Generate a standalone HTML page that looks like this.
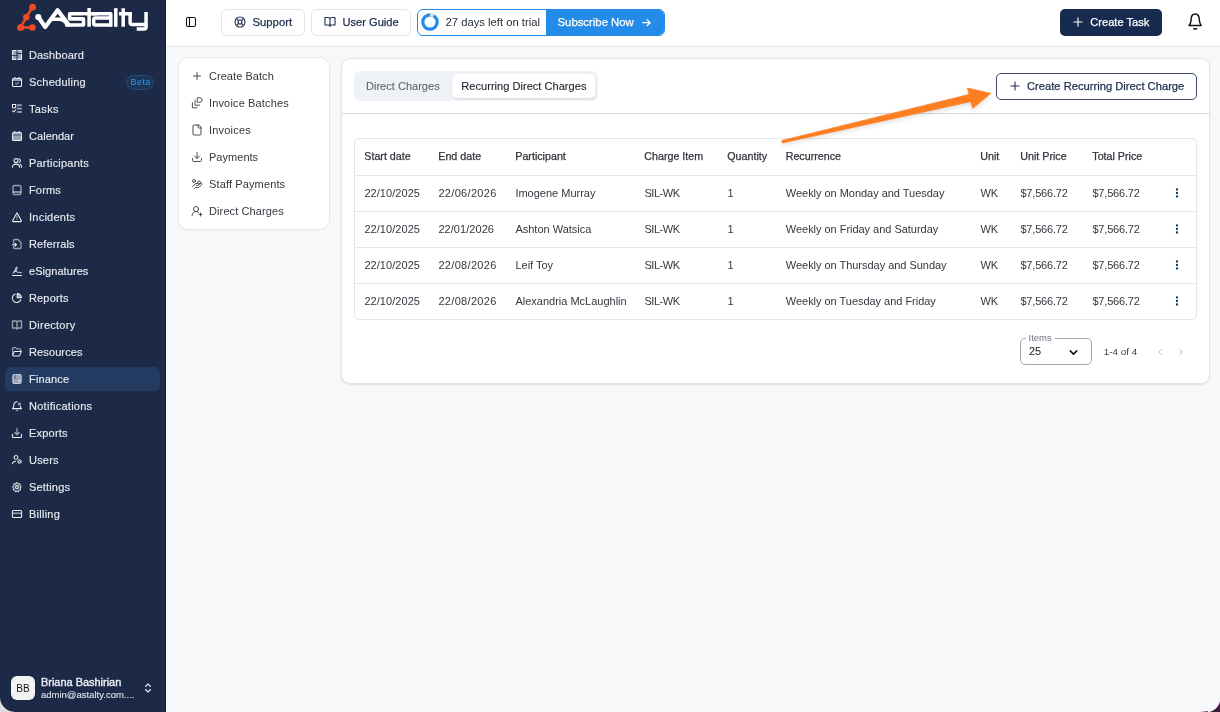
<!DOCTYPE html><html><head><meta charset="utf-8"><style>
*{box-sizing:border-box;margin:0;padding:0}
html,body{width:1220px;height:712px;overflow:hidden;background:#f7f8fa;font-family:"Liberation Sans",sans-serif;font-size:11px;color:#1f2937}
.a{position:absolute}
.t{position:absolute;white-space:nowrap;line-height:14px}
.i{position:absolute;display:block}
.m{-webkit-text-stroke-width:.25px}
</style></head><body><div id="root" style="position:absolute;left:0;top:0;width:1220px;height:712px;will-change:transform">
<div class="a" style="left:0;top:0;width:166px;height:712px;background:#1c2a47;border-right:1px solid #13203c"></div>
<svg class="i" style="left:0;top:0" width="160" height="36" viewBox="0 0 160 36">
<path d="M32.6 7.2 L26.3 17.2 L20.6 27.5 L32.4 27.5" stroke="#f04a23" stroke-width="2.5" fill="none" stroke-linejoin="round"/>
<g fill="#f04a23"><circle cx="32.6" cy="7.2" r="3.4"/><circle cx="26.3" cy="17.2" r="3.2"/><circle cx="20.6" cy="27.5" r="3.5"/><circle cx="32.4" cy="27.5" r="3.3"/></g>
<circle cx="38.3" cy="17" r="3.1" fill="#fff"/>
<g stroke="#fff" fill="none" stroke-width="3.6" stroke-linejoin="round" stroke-linecap="round">
<path d="M38.3 17 L45.2 27 L57.6 10.2 L68.5 24.6" stroke-width="4.1"/>
<path d="M52 19.2 L60 19.2 Q64 19.8 68 24.8"/>
<path d="M66.5 25 H83.5 V19.2 Q83.5 18.85 83 18.85 H70 Q69.6 18.85 69.6 18.4 V14.2 Q69.6 13.75 70 13.75 H84"/>
</g>
<g stroke="#fff" fill="none" stroke-width="3.5" stroke-linejoin="round">
<path d="M85 13.85 H97 M89.1 7.9 V26.8"/>
<path d="M92 13.85 H110.8 V26.8"/>
<path d="M110.8 25.1 H95.5 Q93.7 25.1 93.7 23.3 V19.8 Q93.7 18.1 95.5 18.1 H110.8"/>
<path d="M115.8 8.2 V26.8"/>
<path d="M119 13.85 H131.8 M123.2 8.2 V26.8"/>
<path d="M130.1 12.1 V22.6 Q130.1 24.6 132.1 24.6 H146"/>
<path d="M146.05 12.1 V27 Q146.05 29 144 29 H136.7"/>
</g>
</svg>
<div class="i" style="left:11px;top:49px"><svg width="12" height="12" viewBox="-1 -1 12 12" fill="none" stroke="#eef0f4" stroke-width="1.05" stroke-linecap="round" stroke-linejoin="round"><rect x="0.5" y="0.5" width="9" height="9" rx=".6" fill="rgba(212,218,228,.68)"/><path d="M5 0v10M0 5.6h5M5 3.6h5" stroke="#1c2a47" stroke-width=".9"/></svg></div>
<div class="t m" style="left:29px;top:48px;color:#e8ebf0;-webkit-text-stroke-width:.15px;letter-spacing:0.125px">Dashboard</div>
<div class="i" style="left:11px;top:76px"><svg width="12" height="12" viewBox="-1 -1 12 12" fill="none" stroke="#eef0f4" stroke-width="1.05" stroke-linecap="round" stroke-linejoin="round"><rect x="0.5" y="1.5" width="9" height="8" rx="1"/><rect x="1" y="2" width="8" height="2" fill="rgba(212,218,228,.68)" stroke="none"/><circle cx="2.8" cy="1.2" r="1.1" fill="#c8ced8" stroke="none"/><circle cx="7.2" cy="1.2" r="1.1" fill="#c8ced8" stroke="none"/><path d="M3.4 6.4l1.1 1 2-2" stroke="rgba(212,218,228,.68)"/></svg></div>
<div class="t m" style="left:29px;top:75px;color:#e8ebf0;-webkit-text-stroke-width:.15px;letter-spacing:0.244px">Scheduling</div>
<div class="i" style="left:11px;top:103px"><svg width="12" height="12" viewBox="-1 -1 12 12" fill="none" stroke="#eef0f4" stroke-width="1.05" stroke-linecap="round" stroke-linejoin="round"><rect x="0.5" y="0.5" width="3.2" height="3.2"/><rect x="1.5" y="1.5" width="1.2" height="1.2" fill="#000" stroke="none"/><path d="M0.6 6.8l1.2 1.1 2-2"/><rect x="5" y="0.3" width="4.8" height="1.8" fill="rgba(212,218,228,.68)" stroke="none"/><rect x="5" y="3.7" width="4.8" height="1.8" fill="rgba(212,218,228,.68)" stroke="none"/><rect x="5" y="7.1" width="4.8" height="1.8" fill="rgba(212,218,228,.68)" stroke="none"/></svg></div>
<div class="t m" style="left:29px;top:102px;color:#e8ebf0;-webkit-text-stroke-width:.15px;letter-spacing:0.35px">Tasks</div>
<div class="i" style="left:11px;top:130px"><svg width="12" height="12" viewBox="-1 -1 12 12" fill="none" stroke="#eef0f4" stroke-width="1.05" stroke-linecap="round" stroke-linejoin="round"><rect x="0.5" y="1.5" width="9" height="8" rx="1"/><rect x="1" y="2" width="8" height="7" fill="rgba(212,218,228,.68)" stroke="none"/><path d="M1 4.1h8" stroke="#1c2a47" stroke-width=".5"/><circle cx="2.8" cy="1.2" r="1.1" fill="#c8ced8" stroke="none"/><circle cx="7.2" cy="1.2" r="1.1" fill="#c8ced8" stroke="none"/></svg></div>
<div class="t m" style="left:29px;top:129px;color:#e8ebf0;-webkit-text-stroke-width:.15px;letter-spacing:0.043px">Calendar</div>
<div class="i" style="left:11px;top:157px"><svg width="12" height="12" viewBox="-1 -1 12 12" fill="none" stroke="#eef0f4" stroke-width="1.05" stroke-linecap="round" stroke-linejoin="round"><circle cx="4" cy="2.6" r="2"/><path d="M0.4 9.3c0-2 1.5-3.2 3.6-3.2s3.6 1.2 3.6 3.2"/><path d="M7 0.8c1 .4 1.4 1.2 1.4 1.9s-.4 1.4-1.4 1.8M8.2 6.3c.9.4 1.4 1.5 1.4 3"/></svg></div>
<div class="t m" style="left:29px;top:156px;color:#e8ebf0;-webkit-text-stroke-width:.15px;letter-spacing:0.209px">Participants</div>
<div class="i" style="left:11px;top:184px"><svg width="12" height="12" viewBox="-1 -1 12 12" fill="none" stroke="#eef0f4" stroke-width="1.05" stroke-linecap="round" stroke-linejoin="round"><rect x="1" y="0.5" width="8" height="9" rx="1.4" stroke="rgba(212,218,228,.68)" stroke-width="1.3"/><path d="M1 7h8" stroke="#eef0f4"/></svg></div>
<div class="t m" style="left:29px;top:183px;color:#e8ebf0;-webkit-text-stroke-width:.15px;letter-spacing:0.15px">Forms</div>
<div class="i" style="left:11px;top:211px"><svg width="12" height="12" viewBox="-1 -1 12 12" fill="none" stroke="#eef0f4" stroke-width="1.05" stroke-linecap="round" stroke-linejoin="round"><path d="M5 0.8L0.6 8.8a.6.6 0 0 0 .5.8h7.8a.6.6 0 0 0 .5-.8z"/><path d="M5 3.8v2.2M5 7.6h.01" stroke="rgba(212,218,228,.68)" stroke-width="1.2"/></svg></div>
<div class="t m" style="left:29px;top:210px;color:#e8ebf0;-webkit-text-stroke-width:.15px;letter-spacing:0.237px">Incidents</div>
<div class="i" style="left:11px;top:238px"><svg width="12" height="12" viewBox="-1 -1 12 12" fill="none" stroke="#eef0f4" stroke-width="1.05" stroke-linecap="round" stroke-linejoin="round"><path d="M1.6 4V1.5a1 1 0 0 1 1-1H6l3 3v5a1 1 0 0 1-1 1H2.6a1 1 0 0 1-1-1V7.5" stroke="rgba(212,218,228,.68)" stroke-width="1.3"/><path d="M0.3 5.7h4.2M3 4.3l1.5 1.4L3 7.1"/></svg></div>
<div class="t m" style="left:29px;top:237px;color:#e8ebf0;-webkit-text-stroke-width:.15px;letter-spacing:0.125px">Referrals</div>
<div class="i" style="left:11px;top:265px"><svg width="12" height="12" viewBox="-1 -1 12 12" fill="none" stroke="#eef0f4" stroke-width="1.05" stroke-linecap="round" stroke-linejoin="round"><path d="M0.5 9.5h9"/><path d="M0.8 7.4C2.2 7 3.2 4 4 1.8 4.6 .3 5.8 1 5 2.6 4.2 4.5 3 6.5 2.4 6.2c-.8-.3.4-1.6 1.2-1.6 1 0 1.4 2.4 2.4 1.8.8-.5 1.3-.2 1.6.2s1 .3 1.8 0" stroke-width=".95"/></svg></div>
<div class="t m" style="left:29px;top:264px;color:#e8ebf0;-webkit-text-stroke-width:.15px;letter-spacing:0.06px">eSignatures</div>
<div class="i" style="left:11px;top:292px"><svg width="12" height="12" viewBox="-1 -1 12 12" fill="none" stroke="#eef0f4" stroke-width="1.05" stroke-linecap="round" stroke-linejoin="round"><path d="M8.8 6.8A4.4 4.4 0 1 1 3.2 1"/><path d="M5.2 0.6v4.2h4.2A4.2 4.2 0 0 0 5.2 .6z" fill="rgba(212,218,228,.68)" stroke="#eef0f4"/></svg></div>
<div class="t m" style="left:29px;top:291px;color:#e8ebf0;-webkit-text-stroke-width:.15px;letter-spacing:0.15px">Reports</div>
<div class="i" style="left:11px;top:319px"><svg width="12" height="12" viewBox="-1 -1 12 12" fill="none" stroke="#eef0f4" stroke-width="1.05" stroke-linecap="round" stroke-linejoin="round"><path d="M0.5 1h3a1.5 1.5 0 0 1 1.5 1.5V9.3A1.3 1.3 0 0 0 3.8 8H.5zM9.5 1h-3A1.5 1.5 0 0 0 5 2.5V9.3A1.3 1.3 0 0 1 6.2 8h3.3z" stroke="rgba(212,218,228,.68)" stroke-width="1.3"/></svg></div>
<div class="t m" style="left:29px;top:318px;color:#e8ebf0;-webkit-text-stroke-width:.15px;letter-spacing:0.275px">Directory</div>
<div class="i" style="left:11px;top:346px"><svg width="12" height="12" viewBox="-1 -1 12 12" fill="none" stroke="#eef0f4" stroke-width="1.05" stroke-linecap="round" stroke-linejoin="round"><path d="M0.6 7.8V1.6a1 1 0 0 1 1-1h2l1.2 1.3h3a1 1 0 0 1 1 1v1" stroke="rgba(212,218,228,.68)" stroke-width="1.2"/><path d="M0.6 8.4l1.8-4h7l-1.6 4a1 1 0 0 1-.9.6H1.5" stroke="#eef0f4"/></svg></div>
<div class="t m" style="left:29px;top:345px;color:#e8ebf0;-webkit-text-stroke-width:.15px;letter-spacing:0.112px">Resources</div>
<div class="a" style="left:5px;top:367px;width:155px;height:24px;border-radius:5.5px;background:#233a61"></div>
<div class="i" style="left:11px;top:373px"><svg width="12" height="12" viewBox="-1 -1 12 12" fill="none" stroke="#eef0f4" stroke-width="1.05" stroke-linecap="round" stroke-linejoin="round"><rect x="0.8" y="0.5" width="8.4" height="9" rx="1.4" fill="rgba(212,218,228,.68)" stroke="rgba(220,225,235,.8)"/><path d="M6.6 6.8h1.2" stroke="#eef0f4"/><path d="M3 1v3.5" stroke="#263c63" stroke-width=".7"/></svg></div>
<div class="t m" style="left:29px;top:372px;color:#e8ebf0;-webkit-text-stroke-width:.15px;letter-spacing:0.167px">Finance</div>
<div class="i" style="left:11px;top:400px"><svg width="12" height="12" viewBox="-1 -1 12 12" fill="none" stroke="#eef0f4" stroke-width="1.05" stroke-linecap="round" stroke-linejoin="round"><path d="M5.2 0.8A3.3 3.3 0 0 0 1.8 4c0 2.5-1.3 3.6-1.3 3.6h9s-.9-.8-1.2-2.3"/><circle cx="7.5" cy="3" r="1.6" fill="rgba(212,218,228,.68)" stroke="none"/><path d="M4.2 9.2l.8.6.8-.6" stroke="rgba(212,218,228,.68)"/></svg></div>
<div class="t m" style="left:29px;top:399px;color:#e8ebf0;-webkit-text-stroke-width:.15px;letter-spacing:0.267px">Notifications</div>
<div class="i" style="left:11px;top:427px"><svg width="12" height="12" viewBox="-1 -1 12 12" fill="none" stroke="#eef0f4" stroke-width="1.05" stroke-linecap="round" stroke-linejoin="round"><path d="M0.5 6.3v2.2a1 1 0 0 0 1 1h7a1 1 0 0 0 1-1V6.3"/><path d="M5 0.5v6M2.8 4.5L5 6.8l2.2-2.3" stroke="rgba(212,218,228,.68)" stroke-width="1.3"/></svg></div>
<div class="t m" style="left:29px;top:426px;color:#e8ebf0;-webkit-text-stroke-width:.15px;letter-spacing:0.217px">Exports</div>
<div class="i" style="left:11px;top:454px"><svg width="12" height="12" viewBox="-1 -1 12 12" fill="none" stroke="#eef0f4" stroke-width="1.05" stroke-linecap="round" stroke-linejoin="round"><circle cx="4" cy="2.4" r="1.9"/><path d="M0.5 8.8c.2-1.6 1.3-2.6 3-2.6"/><circle cx="7.6" cy="6.6" r="1.1" stroke-width="1"/><circle cx="7.6" cy="6.6" r="2.1" stroke="rgba(212,218,228,.68)" stroke-width=".9" stroke-dasharray="1 .6"/></svg></div>
<div class="t m" style="left:29px;top:453px;color:#e8ebf0;-webkit-text-stroke-width:.15px;letter-spacing:0.2px">Users</div>
<div class="i" style="left:11px;top:481px"><svg width="12" height="12" viewBox="-1 -1 12 12" fill="none" stroke="#eef0f4" stroke-width="1.05" stroke-linecap="round" stroke-linejoin="round"><path d="M5 0.4l1.2 1.3 1.8-.1.2 1.8 1.3 1.2-1 1.6.4 1.7-1.7.6-.8 1.6L5 9.4l-1.6.7-.8-1.6-1.7-.6.4-1.7-1-1.6 1.3-1.2.2-1.8 1.8.1z" stroke-width="1" stroke="#eef0f4" fill="rgba(212,218,228,.25)" transform="scale(.95) translate(.25 .25)"/><circle cx="5" cy="5" r="1.4" stroke="#eef0f4" fill="#1c2a47"/></svg></div>
<div class="t m" style="left:29px;top:480px;color:#e8ebf0;-webkit-text-stroke-width:.15px;letter-spacing:0.171px">Settings</div>
<div class="i" style="left:11px;top:508px"><svg width="12" height="12" viewBox="-1 -1 12 12" fill="none" stroke="#eef0f4" stroke-width="1.05" stroke-linecap="round" stroke-linejoin="round"><rect x="0.4" y="1.5" width="9.2" height="7" rx="1"/><rect x="0.9" y="3.5" width="8.2" height="1.6" fill="rgba(212,218,228,.68)" stroke="none"/></svg></div>
<div class="t m" style="left:29px;top:507px;color:#e8ebf0;-webkit-text-stroke-width:.15px;letter-spacing:0.25px">Billing</div>
<div class="a" style="left:126px;top:75px;width:28px;height:15px;border-radius:8px;background:#1d3557;border:1px solid #24497a"></div>
<div class="t" style="left:130.5px;top:74.8px;color:#2b98f0;font-size:9px;letter-spacing:.45px;line-height:15px">Beta</div>
<div class="a" style="left:11px;top:676px;width:24px;height:24px;border-radius:6px;background:#f2f2f3"></div>
<div class="t" style="left:11px;top:677px;width:24px;line-height:24px;text-align:center;font-size:10px;color:#111">BB</div>
<div class="t" style="left:41px;top:675px;color:#eef0f4;font-size:10.95px;-webkit-text-stroke-width:.35px">Briana Bashirian</div>
<div class="t" style="left:41px;top:688px;color:#dfe3ea;font-size:9.5px;-webkit-text-stroke-width:.1px">admin@astalty.com....</div>
<div class="i" style="left:142px;top:682px"><svg width="12" height="12" viewBox="0 0 24 24" fill="none" stroke="#e6e9ef" stroke-width="2.2" stroke-linecap="round" stroke-linejoin="round" ><path d="M7 15l5 5 5-5M7 9l5-5 5 5"/></svg></div>
<div class="a" style="left:166px;top:0;width:1054px;height:47px;background:#fff;border-bottom:1px solid #e4e7eb"></div>
<div class="i" style="left:185px;top:16px"><svg width="12" height="12" viewBox="0 0 24 24" fill="none" stroke="#111" stroke-width="2.2" stroke-linecap="round" stroke-linejoin="round" ><rect x="3" y="3" width="18" height="18" rx="3"/><path d="M9 3v18"/></svg></div>
<div class="a" style="left:221px;top:9px;width:84px;height:27px;border:1px solid #dfe5ee;border-radius:6px;background:#fff"></div>
<div class="i" style="left:234px;top:16px"><svg width="12" height="12" viewBox="0 0 24 24" fill="none" stroke="#1e2d4d" stroke-width="2.2" stroke-linecap="round" stroke-linejoin="round" ><circle cx="12" cy="12" r="10"/><circle cx="12" cy="12" r="4"/><path d="M4.9 4.9l4.3 4.3M14.8 9.2l4.3-4.3M14.8 14.8l4.3 4.3M9.2 14.8l-4.3 4.3"/></svg></div>
<div class="t m" style="left:252.5px;top:15px;color:#1e2d4d;font-size:11.3px">Support</div>
<div class="a" style="left:311px;top:9px;width:100px;height:27px;border:1px solid #dfe5ee;border-radius:6px;background:#fff"></div>
<div class="i" style="left:324px;top:16px"><svg width="12" height="12" viewBox="0 0 24 24" fill="none" stroke="#1e2d4d" stroke-width="2.2" stroke-linecap="round" stroke-linejoin="round" ><path d="M2 3h6a4 4 0 0 1 4 4v14a3 3 0 0 0-3-3H2zM22 3h-6a4 4 0 0 0-4 4v14a3 3 0 0 1 3-3h7z"/></svg></div>
<div class="t m" style="left:342.5px;top:15px;color:#1e2d4d;font-size:11.1px">User Guide</div>
<div class="a" style="left:417px;top:9px;width:248px;height:27px;border:1px solid #238ce9;border-radius:6px;background:#fff;overflow:hidden"><div class="a" style="left:128px;top:0;width:120px;height:25px;background:#238ce9"></div></div>
<svg class="i" style="left:420.8px;top:12.8px" width="18" height="18" viewBox="0 0 18 18"><circle cx="9" cy="9" r="7.2" stroke="#238ce9" stroke-width="3.2" fill="none"/><path d="M9 1.8 A7.2 7.2 0 0 1 12.6 2.8" stroke="#d6e2ee" stroke-width="3.2" fill="none"/></svg>
<div class="t" style="left:445.5px;top:15px;color:#1f2937;font-size:11.25px">27 days left on trial</div>
<div class="t m" style="left:557.5px;top:15px;color:#fff;font-size:11.35px">Subscribe Now</div>
<svg class="i" style="left:641.5px;top:18.8px" width="9" height="7.4" viewBox="0 0 9 7.4" fill="none" stroke="#fff" stroke-width="1.2" stroke-linecap="round" stroke-linejoin="round"><path d="M0.7 3.7h7.5M5 0.6l3.2 3.1L5 6.8"/></svg>
<div class="a" style="left:1060px;top:9px;width:102px;height:27px;border-radius:5px;background:#172a4f"></div>
<div class="i" style="left:1071px;top:15.3px"><svg width="14" height="14" viewBox="0 0 24 24" fill="none" stroke="#fff" stroke-width="1.9" stroke-linecap="round" stroke-linejoin="round" ><path d="M5 12h14M12 5v14"/></svg></div>
<div class="t m" style="left:1090.3px;top:15px;color:#fff;font-size:11.1px">Create Task</div>
<svg class="i" style="left:1186px;top:12px" width="18" height="20" viewBox="0 0 18 20" fill="none" stroke="#111" stroke-width="1.5" stroke-linejoin="round" stroke-linecap="round"><path d="M5 8.5 Q5 2 9.2 2 Q13.4 2 13.4 8.5 Q13.6 11.5 15.2 13.6 H3 Q4.8 11.5 5 8.5z"/><path d="M7.8 16.6 Q9.2 17.6 10.6 16.6"/></svg>
<div class="a" style="left:179px;top:58px;width:150px;height:171px;background:#fff;border-radius:9px;box-shadow:0 0 0 1px #e8e9ec,0 1px 2px rgba(0,0,0,.07)"></div>
<div class="i" style="left:191px;top:70px"><svg width="12" height="12" viewBox="0 0 24 24" fill="none" stroke="#464b55" stroke-width="2" stroke-linecap="round" stroke-linejoin="round" ><path d="M5 12h14M12 5v14"/></svg></div>
<div class="t" style="left:209px;top:69px;color:#33373e;letter-spacing:0.05px">Create Batch</div>
<svg class="i" style="left:191px;top:97px" width="12" height="12" viewBox="0 0 12 12" fill="none" stroke="#464b55" stroke-width="1" stroke-linecap="round" stroke-linejoin="round"><path d="M6.6 0.8h2.3a2.2 2.2 0 0 1 0 4.4H6.6z"/><path d="M4 3.2V8.2H8.6"/><path d="M1.4 5.6V10.8H6"/></svg>
<div class="t" style="left:209px;top:96px;color:#33373e;letter-spacing:0.15px">Invoice Batches</div>
<div class="i" style="left:191px;top:124px"><svg width="12" height="12" viewBox="0 0 24 24" fill="none" stroke="#464b55" stroke-width="2" stroke-linecap="round" stroke-linejoin="round" ><path d="M15 2H6a2 2 0 0 0-2 2v16a2 2 0 0 0 2 2h12a2 2 0 0 0 2-2V7z"/><path d="M14 2v4a2 2 0 0 0 2 2h4"/></svg></div>
<div class="t" style="left:209px;top:123px;color:#33373e;letter-spacing:0.2px">Invoices</div>
<div class="i" style="left:191px;top:151px"><svg width="12" height="12" viewBox="0 0 24 24" fill="none" stroke="#464b55" stroke-width="2" stroke-linecap="round" stroke-linejoin="round" ><path d="M21 15v4a2 2 0 0 1-2 2H5a2 2 0 0 1-2-2v-4M7 10l5 5 5-5M12 15V3"/></svg></div>
<div class="t" style="left:209px;top:150px;color:#33373e;letter-spacing:0.03px">Payments</div>
<div class="i" style="left:191px;top:178px"><svg width="12" height="12" viewBox="0 0 24 24" fill="none" stroke="#464b55" stroke-width="2" stroke-linecap="round" stroke-linejoin="round" ><path d="M11 15h2a2 2 0 1 0 0-4h-3c-.6 0-1.1.2-1.4.6L3 17"/><path d="M7 21l1.6-1.4c.3-.4.8-.6 1.4-.6h4c1.1 0 2.1-.4 2.8-1.2l4.6-4.4a2 2 0 0 0-2.75-2.91l-4.2 3.9"/><circle cx="16" cy="9" r="3"/><circle cx="6" cy="6" r="3"/></svg></div>
<div class="t" style="left:209px;top:177px;color:#33373e;letter-spacing:0.13px">Staff Payments</div>
<div class="i" style="left:191px;top:205px"><svg width="12" height="12" viewBox="0 0 24 24" fill="none" stroke="#464b55" stroke-width="2" stroke-linecap="round" stroke-linejoin="round" ><path d="M2 21a8 8 0 0 1 13.3-6"/><circle cx="10" cy="8" r="5"/><path d="M19 16v6M22 19h-6"/></svg></div>
<div class="t" style="left:209px;top:204px;color:#33373e;letter-spacing:0.11px">Direct Charges</div>
<div class="a" style="left:341px;top:58px;width:869px;height:326px;background:#fff;border-radius:9px;border:1px solid #dfe5ee;box-shadow:0 1px 2px rgba(16,24,40,.1)"></div>
<div class="a" style="left:354px;top:71px;width:244px;height:30px;border-radius:6px;background:#eef2f6"></div>
<div class="a" style="left:452px;top:74px;width:143px;height:24px;border-radius:5px;background:#fff;box-shadow:0 1px 2px rgba(0,0,0,.1)"></div>
<div class="t m" style="left:366px;top:79px;color:#63676e;font-size:11.05px;-webkit-text-stroke-width:.1px">Direct Charges</div>
<div class="t m" style="left:461.3px;top:79px;color:#1f2430;font-size:11.1px;-webkit-text-stroke-width:.12px">Recurring Direct Charges</div>
<div class="a" style="left:342px;top:113px;width:867px;height:1px;background:#d5d9e0"></div>
<div class="a" style="left:996px;top:73px;width:201px;height:27px;border:1px solid #3d4a66;border-radius:5px;background:#fff"></div>
<div class="i" style="left:1008px;top:79px"><svg width="14" height="14" viewBox="0 0 24 24" fill="none" stroke="#1e2d4d" stroke-width="1.8" stroke-linecap="round" stroke-linejoin="round" ><path d="M5 12h14M12 5v14"/></svg></div>
<div class="t m" style="left:1027px;top:79px;color:#1e2d4d;font-size:11.2px">Create Recurring Direct Charge</div>
<div class="a" style="left:354px;top:138px;width:843px;height:182px;border:1px solid #e1e7ef;border-radius:5px"></div>
<div class="t m" style="left:364.3px;top:149px;color:#30343b;font-size:10.7px">Start date</div>
<div class="t m" style="left:438.3px;top:149px;color:#30343b;font-size:10.7px">End date</div>
<div class="t m" style="left:515.3px;top:149px;color:#30343b;font-size:10.7px">Participant</div>
<div class="t m" style="left:644.3px;top:149px;color:#30343b;font-size:10.7px">Charge Item</div>
<div class="t m" style="left:727.3px;top:149px;color:#30343b;font-size:10.7px">Quantity</div>
<div class="t m" style="left:785.6999999999999px;top:149px;color:#30343b;font-size:10.7px">Recurrence</div>
<div class="t m" style="left:980.3px;top:149px;color:#30343b;font-size:10.7px">Unit</div>
<div class="t m" style="left:1020.3px;top:149px;color:#30343b;font-size:10.7px">Unit Price</div>
<div class="t m" style="left:1092.3px;top:149px;color:#30343b;font-size:10.7px">Total Price</div>
<div class="a" style="left:355px;top:175px;width:841px;height:1px;background:#e3e8ef"></div>
<div class="t" style="left:364.4px;top:186px;color:#33373e;letter-spacing:0.06px">22/10/2025</div>
<div class="t" style="left:438.4px;top:186px;color:#33373e;letter-spacing:0.32px">22/06/2026</div>
<div class="t" style="left:515.4px;top:186px;color:#33373e;letter-spacing:0px">Imogene Murray</div>
<div class="t" style="left:644.4px;top:186px;color:#33373e;letter-spacing:-0.45px">SIL-WK</div>
<div class="t" style="left:727.4px;top:186px;color:#33373e;letter-spacing:0px">1</div>
<div class="t" style="left:785.8px;top:186px;color:#33373e;letter-spacing:-0.03px">Weekly on Monday and Tuesday</div>
<div class="t" style="left:980.4px;top:186px;color:#33373e;letter-spacing:0px">WK</div>
<div class="t" style="left:1020.4px;top:186px;color:#33373e;letter-spacing:-0.18px">$7,566.72</div>
<div class="t" style="left:1092.4px;top:186px;color:#33373e;letter-spacing:-0.18px">$7,566.72</div>
<svg class="i" style="left:1175px;top:187px" width="4" height="12" viewBox="0 0 4 12"><g fill="#0f3566"><circle cx="2" cy="2.5" r="1.15"/><circle cx="2" cy="6" r="1.15"/><circle cx="2" cy="9.5" r="1.15"/></g></svg>
<div class="a" style="left:355px;top:211px;width:841px;height:1px;background:#e3e8ef"></div>
<div class="t" style="left:364.4px;top:222px;color:#33373e;letter-spacing:0.06px">22/10/2025</div>
<div class="t" style="left:438.4px;top:222px;color:#33373e;letter-spacing:0.06px">22/01/2026</div>
<div class="t" style="left:515.4px;top:222px;color:#33373e;letter-spacing:0px">Ashton Watsica</div>
<div class="t" style="left:644.4px;top:222px;color:#33373e;letter-spacing:-0.45px">SIL-WK</div>
<div class="t" style="left:727.4px;top:222px;color:#33373e;letter-spacing:0px">1</div>
<div class="t" style="left:785.8px;top:222px;color:#33373e;letter-spacing:-0.03px">Weekly on Friday and Saturday</div>
<div class="t" style="left:980.4px;top:222px;color:#33373e;letter-spacing:0px">WK</div>
<div class="t" style="left:1020.4px;top:222px;color:#33373e;letter-spacing:-0.18px">$7,566.72</div>
<div class="t" style="left:1092.4px;top:222px;color:#33373e;letter-spacing:-0.18px">$7,566.72</div>
<svg class="i" style="left:1175px;top:223px" width="4" height="12" viewBox="0 0 4 12"><g fill="#0f3566"><circle cx="2" cy="2.5" r="1.15"/><circle cx="2" cy="6" r="1.15"/><circle cx="2" cy="9.5" r="1.15"/></g></svg>
<div class="a" style="left:355px;top:247px;width:841px;height:1px;background:#e3e8ef"></div>
<div class="t" style="left:364.4px;top:258px;color:#33373e;letter-spacing:0.06px">22/10/2025</div>
<div class="t" style="left:438.4px;top:258px;color:#33373e;letter-spacing:0.32px">22/08/2026</div>
<div class="t" style="left:515.4px;top:258px;color:#33373e;letter-spacing:0px">Leif Toy</div>
<div class="t" style="left:644.4px;top:258px;color:#33373e;letter-spacing:-0.45px">SIL-WK</div>
<div class="t" style="left:727.4px;top:258px;color:#33373e;letter-spacing:0px">1</div>
<div class="t" style="left:785.8px;top:258px;color:#33373e;letter-spacing:-0.03px">Weekly on Thursday and Sunday</div>
<div class="t" style="left:980.4px;top:258px;color:#33373e;letter-spacing:0px">WK</div>
<div class="t" style="left:1020.4px;top:258px;color:#33373e;letter-spacing:-0.18px">$7,566.72</div>
<div class="t" style="left:1092.4px;top:258px;color:#33373e;letter-spacing:-0.18px">$7,566.72</div>
<svg class="i" style="left:1175px;top:259px" width="4" height="12" viewBox="0 0 4 12"><g fill="#0f3566"><circle cx="2" cy="2.5" r="1.15"/><circle cx="2" cy="6" r="1.15"/><circle cx="2" cy="9.5" r="1.15"/></g></svg>
<div class="a" style="left:355px;top:283px;width:841px;height:1px;background:#e3e8ef"></div>
<div class="t" style="left:364.4px;top:294px;color:#33373e;letter-spacing:0.06px">22/10/2025</div>
<div class="t" style="left:438.4px;top:294px;color:#33373e;letter-spacing:0.32px">22/08/2026</div>
<div class="t" style="left:515.4px;top:294px;color:#33373e;letter-spacing:0px">Alexandria McLaughlin</div>
<div class="t" style="left:644.4px;top:294px;color:#33373e;letter-spacing:-0.45px">SIL-WK</div>
<div class="t" style="left:727.4px;top:294px;color:#33373e;letter-spacing:0px">1</div>
<div class="t" style="left:785.8px;top:294px;color:#33373e;letter-spacing:-0.03px">Weekly on Tuesday and Friday</div>
<div class="t" style="left:980.4px;top:294px;color:#33373e;letter-spacing:0px">WK</div>
<div class="t" style="left:1020.4px;top:294px;color:#33373e;letter-spacing:-0.18px">$7,566.72</div>
<div class="t" style="left:1092.4px;top:294px;color:#33373e;letter-spacing:-0.18px">$7,566.72</div>
<svg class="i" style="left:1175px;top:295px" width="4" height="12" viewBox="0 0 4 12"><g fill="#0f3566"><circle cx="2" cy="2.5" r="1.15"/><circle cx="2" cy="6" r="1.15"/><circle cx="2" cy="9.5" r="1.15"/></g></svg>
<div class="a" style="left:1020px;top:338px;width:72px;height:27px;border:1px solid #a3a8b0;border-radius:5px"></div>
<div class="t" style="left:1026px;top:332.3px;padding:0 3px 0 2.5px;background:#fff;color:#6b7280;font-size:9.5px;line-height:11px">Items</div>
<div class="t" style="left:1029px;top:344px;color:#111827;font-size:11px">25</div>
<div class="i" style="left:1067px;top:345.5px"><svg width="13" height="13" viewBox="0 0 24 24" fill="none" stroke="#111" stroke-width="2.8" stroke-linecap="round" stroke-linejoin="round" ><path d="M6 9l6 6 6-6"/></svg></div>
<div class="t" style="left:1103.8px;top:344.5px;color:#374151;font-size:9.9px">1-4 of 4</div>
<div class="i" style="left:1155px;top:346.5px"><svg width="10" height="10" viewBox="0 0 24 24" fill="none" stroke="#a7abb2" stroke-width="2" stroke-linecap="round" stroke-linejoin="round" ><path d="M15 18l-6-6 6-6"/></svg></div>
<div class="i" style="left:1175.8px;top:346.5px"><svg width="10" height="10" viewBox="0 0 24 24" fill="none" stroke="#a7abb2" stroke-width="2" stroke-linecap="round" stroke-linejoin="round" ><path d="M9 18l6-6-6-6"/></svg></div>
<svg class="i" style="left:0;top:0;filter:drop-shadow(0 2px 2px rgba(0,0,0,.13))" width="1220" height="712" viewBox="0 0 1220 712"><path d="M782.5 140.4 L969.2 94.4 L967.5 88.1 L990.8 93.4 L972.7 108.3 L970.8 101.6 L783.1 142.8 Z" fill="#fd7e21" stroke="#fd7e21" stroke-width="0.8" stroke-linejoin="round"/><circle cx="782.8" cy="141.6" r="1.3" fill="#fd7e21"/></svg>
<svg class="i" style="left:0;top:697px" width="15" height="15" viewBox="0 0 15 15"><path d="M0 0 A15 15 0 0 0 15 15 L0 15 Z" fill="#dedfe1"/></svg>
<svg class="i" style="left:1200px;top:692px" width="20" height="20" viewBox="0 0 20 20"><path d="M20 6.5 A13.5 13.5 0 0 1 6.5 20 L20 20 Z" fill="#3d1d3f"/><path d="M19.6 7.2 A12.6 12.6 0 0 1 7.2 19.6" fill="none" stroke="rgba(255,255,255,.95)" stroke-width="1"/><rect x="0" y="19" width="8" height="1" fill="url(#gb)"/><defs><linearGradient id="gb"><stop offset="0" stop-color="#3d1d3f" stop-opacity="0"/><stop offset="1" stop-color="#3d1d3f" stop-opacity=".8"/></linearGradient></defs></svg>
</div></body></html>
